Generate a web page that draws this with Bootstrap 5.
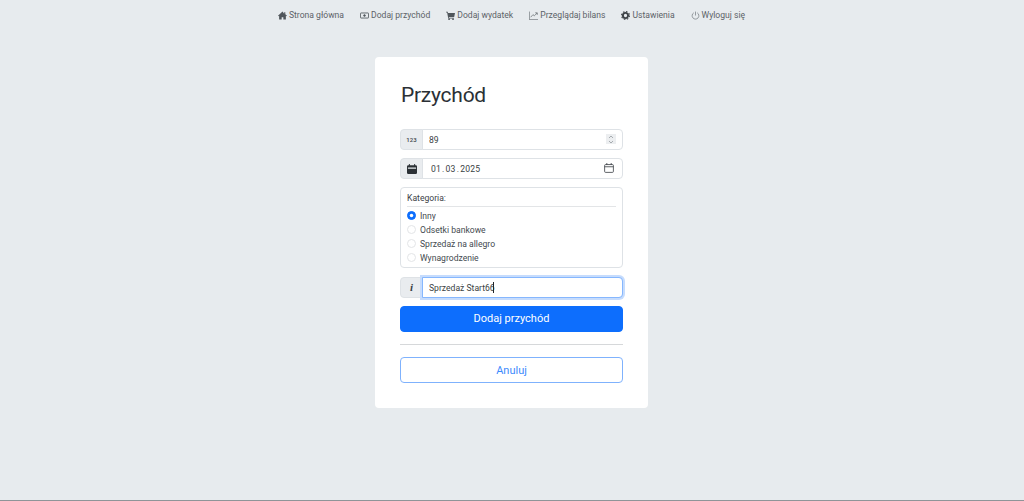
<!DOCTYPE html>
<html lang="pl">
<head>
    <meta charset="UTF-8">
    <meta name="viewport" content="width=device-width, initial-scale=1.0">
    <title>Przychód</title>
    <link href="https://cdn.jsdelivr.net/npm/bootstrap@5.3.3/dist/css/bootstrap.min.css" rel="stylesheet">
    <style>
        html, body {
            height: 100%;
        }

        body {
            background-color: #e7ebee;
            font-family: Roboto, "Open Sans", sans-serif;
            color: #212529;
            border-bottom: 1px solid #8f9498;
            padding-right: 1px;
            overflow: hidden;
        }

        .top-menu {
            height: 31px;
            gap: 16px;
        }

        .top-menu a {
            color: #5c6267;
            font-size: 8.6px;
            text-decoration: none;
            display: flex;
            align-items: center;
            gap: 2px;
            white-space: nowrap;
        }

        .top-menu svg {
            width: 9px;
            height: 9px;
            flex: none;
        }

        .form-box {
            width: 273px;
            height: 351px;
            margin: 26px auto 0;
            padding: 26px 25px 0;
            background: #fff;
            border-radius: 4px;
        }

        .form-box h1 {
            font-size: 21px;
            font-weight: 400;
            letter-spacing: -.25px;
            line-height: 24px;
            margin: 0 0 22px 1px;
            color: #2b3035;
        }

        .field-wrap {
            margin-bottom: 8px;
        }

        .field-row {
            height: 21px;
            flex-wrap: nowrap;
        }

        .field-row .input-group-text {
            width: 23px;
            padding: 0;
            justify-content: center;
            font-size: 6px;
            font-weight: 600;
            background: #e9ecef;
            border-color: #dee2e6;
            border-radius: 4px 0 0 4px;
            color: #4a4f54;
        }

        .field-row .info-mark {
            font-family: "Liberation Serif", serif;
            font-size: 11px;
            font-weight: 700;
            color: #3a3f44;
        }

        .field-row .form-control {
            height: 21px;
            min-height: 0;
            padding: 0 6px;
            font-size: 8.6px;
            border-color: #dee2e6;
            border-radius: 0 4px 4px 0;
            color: #3a3f44;
        }

        .field-row .date-field {
            padding: 1px 0 0 8px;
            word-spacing: -1.300px;
            letter-spacing: .2px;
        }

        .field-row .form-control.active-field {
            border: 1px solid #86b7fe;
            box-shadow: 0 0 0 2px #c6dcfd;
            position: relative;
            z-index: 3;
        }

        .num-spin {
            width: 10px;
            height: 10px;
            background: #eceef0;
            top: 5px;
            right: 7px;
            z-index: 5;
        }

        .date-ico {
            width: 10px;
            height: 10px;
            top: 5px;
            right: 9px;
            z-index: 5;
        }

        .text-caret {
            width: 1px;
            height: 11px;
            background: #212529;
            top: 5px;
            left: 93px;
            z-index: 5;
        }

        .cat-box {
            height: 81px;
            margin-bottom: 9px;
            padding: 3px 6px;
            border: 1px solid #dee2e6;
            border-radius: 4px;
            font-size: 8.6px;
        }

        .cat-title {
            line-height: 14px;
            padding-bottom: 1px;
            margin-bottom: 2px;
            border-bottom: 1px solid #e3e5e7;
            color: #3d4247;
        }

        .cat-item {
            height: 14px;
            gap: 4px;
            color: #444a4f;
        }

        .cat-item .form-check-input {
            width: 9px;
            height: 9px;
            margin: -1px 0 0;
            flex: none;
            border-color: #e3e5e7;
        }

        .cat-item .form-check-input:checked {
            background-color: #0d6efd;
            border-color: #0d6efd;
        }

        .form-box .btn {
            height: 26px;
            padding: 1px 0 0;
            font-size: 11px;
            border-radius: 4px;
        }

        .form-box .btn-cancel {
            padding-top: 3px;
            color: #3d8bfd;
            border-color: #7fb2fd;
        }

        .btn-sep {
            margin: 12px 0;
            border-color: #d6d8da;
            opacity: 1;
        }
    </style>
</head>
<body>
    <nav class="top-menu d-flex justify-content-center align-items-center">
        <a href="#"><svg viewBox="0 0 16 16" fill="#50565b"><path d="M8 1 0 8.500l1 1L2 8.600V15h4.500v-4h3v4H14V8.600l1 .9 1-1-3-2.800V2h-2v2.800z"/></svg>Strona główna</a>
        <a href="#"><svg viewBox="0 0 16 16" fill="none" stroke="#50565b" stroke-width="1.500"><rect x=".8" y="3.500" width="14.400" height="9" rx="1"/><circle cx="8" cy="8" r="1.500" fill="#50565b"/></svg>Dodaj przychód</a>
        <a href="#"><svg viewBox="0 0 16 16" fill="#50565b"><path d="M0 1.500h3l.6 2H16l-1.500 7H5l.3 1.500H14v1.300H4L2 2.800H0z"/><circle cx="5.500" cy="14.500" r="1.500"/><circle cx="12.500" cy="14.500" r="1.500"/></svg>Dodaj wydatek</a>
        <a href="#"><svg viewBox="0 0 16 16" fill="none" stroke="#50565b" stroke-width="1.100"><path d="M.6 1v14.400H16"/><path d="m3 11 4-4.500 2.500 2L14.500 3.500"/><path d="M11 3.200h3.700v3.600"/></svg>Przeglądaj bilans</a>
        <a href="#"><svg viewBox="0 0 16 16"><circle cx="8" cy="8" r="4.600" fill="none" stroke="#3f4448" stroke-width="3.400"/><circle cx="8" cy="8" r="7" fill="none" stroke="#3f4448" stroke-width="2" stroke-dasharray="2.700 2.800"/></svg>Ustawienia</a>
        <a href="#"><svg viewBox="0 0 16 16" fill="none" stroke="#62686d" stroke-width="1.100"><path d="M8 1v7"/><path d="M5 3.200a6 6 0 1 0 6 0"/></svg>Wyloguj się</a>
    </nav>

    <main class="form-box">
        <h1>Przychód</h1>
        <form>
            <div class="field-wrap position-relative">
                <div class="input-group field-row">
                    <span class="input-group-text">123</span>
                    <input type="text" class="form-control" value="89">
                </div>
                <span class="num-spin position-absolute d-flex align-items-center justify-content-center">
                    <svg width="6" height="9" viewBox="0 0 6 9" fill="none" stroke="#8a8f94" stroke-width=".7"><path d="m1 3 2-2 2 2M1 6l2 2 2-2"/></svg>
                </span>
            </div>
            <div class="field-wrap position-relative">
                <div class="input-group field-row">
                    <span class="input-group-text">
                        <svg width="10" height="10" viewBox="0 0 16 16" fill="#2b3035"><path d="M3 0h1.500v2h7V0H13v2h1a2 2 0 0 1 2 2v10a2 2 0 0 1-2 2H2a2 2 0 0 1-2-2V4a2 2 0 0 1 2-2h1zM1.500 5.500v2h13v-2z"/></svg>
                    </span>
                    <input type="text" class="form-control date-field" value="01 . 03 . 2025">
                </div>
                <span class="date-ico position-absolute d-flex">
                    <svg width="10" height="10" viewBox="0 0 16 16" fill="none" stroke="#3a3f44" stroke-width="1.300"><rect x="1" y="2.500" width="14" height="12.500" rx="1.500"/><path d="M1 6h14M4.500 0v3M11.500 0v3"/></svg>
                </span>
            </div>
            <div class="cat-box">
                <div class="cat-title">Kategoria:</div>
                <label class="cat-item d-flex align-items-center"><input class="form-check-input" type="radio" name="kategoria" checked>Inny</label>
                <label class="cat-item d-flex align-items-center"><input class="form-check-input" type="radio" name="kategoria">Odsetki bankowe</label>
                <label class="cat-item d-flex align-items-center"><input class="form-check-input" type="radio" name="kategoria">Sprzedaż na allegro</label>
                <label class="cat-item d-flex align-items-center"><input class="form-check-input" type="radio" name="kategoria">Wynagrodzenie</label>
            </div>
            <div class="field-wrap position-relative">
                <div class="input-group field-row">
                    <span class="input-group-text"><i class="info-mark">i</i></span>
                    <input type="text" class="form-control active-field" value="Sprzedaż Start66">
                </div>
                <span class="text-caret position-absolute"></span>
            </div>
            <button type="button" class="btn btn-primary w-100 d-block">Dodaj przychód</button>
            <hr class="btn-sep">
            <button type="button" class="btn btn-outline-primary btn-cancel w-100 d-block">Anuluj</button>
        </form>
    </main>

    <script src="https://cdn.jsdelivr.net/npm/bootstrap@5.3.3/dist/js/bootstrap.bundle.min.js"></script>
</body>
</html>
